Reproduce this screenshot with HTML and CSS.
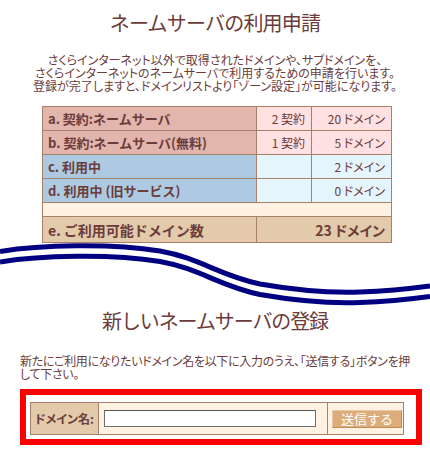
FILE: index.html
```html
<!DOCTYPE html>
<html lang="ja">
<head>
<meta charset="utf-8">
<title>ネームサーバの利用申請</title>
<link rel="stylesheet" href="styles.css">
</head>
<body>
  <h1 class="title">ネームサーバの利用申請</h1>
  <p class="intro">さくらインターネット以外で取得されたドメインや、サブドメインを、<br>さくらインターネットのネームサーバで利用するための申請を行います。<br>登録が完了しますと、ドメインリストより「ゾーン設定」が可能になります。</p>

  <table class="usage">
    <tr class="contract">
      <th>a. 契約:ネームサーバ</th>
      <td class="count">2 契約</td>
      <td class="domains">20 ドメイン</td>
    </tr>
    <tr class="contract">
      <th>b. 契約:ネームサーバ(無料)</th>
      <td class="count">1 契約</td>
      <td class="domains">5 ドメイン</td>
    </tr>
    <tr class="inuse">
      <th>c. 利用中</th>
      <td class="count"></td>
      <td class="domains">2 ドメイン</td>
    </tr>
    <tr class="inuse">
      <th>d. 利用中 (旧サービス)</th>
      <td class="count"></td>
      <td class="domains">0 ドメイン</td>
    </tr>
    <tr class="spacer"><td colspan="3"></td></tr>
    <tr class="total">
      <th>e. ご利用可能ドメイン数</th>
      <td colspan="2" class="domains">23 ドメイン</td>
    </tr>
  </table>

  <svg class="wave" width="430" height="66" viewBox="0 0 430 66" aria-hidden="true">
    <g fill="none" stroke="#000080" stroke-width="5">
      <path d="M0,8.5 C40,2 110,0 160,8 C200,15 220,33 260,41 C300,48 330,50 360,49 C390,48 415,45 430,43"/>
      <path d="M0,8.5 C40,2 110,0 160,8 C200,15 220,33 260,41 C300,48 330,50 360,49 C390,48 415,45 430,43" transform="translate(0,10.5)"/>
    </g>
  </svg>

  <h2 class="title">新しいネームサーバの登録</h2>
  <p class="guide">新たにご利用になりたいドメイン名を以下に入力のうえ、「送信する」ボタンを押<br>して下さい。</p>

  <form class="register" onsubmit="return false">
    <table class="entry">
      <tr>
        <th>ドメイン名:</th>
        <td class="field"><input type="text" class="domain-input"></td>
        <td class="action"><button type="submit" class="send">送信する</button></td>
      </tr>
    </table>
  </form>
</body>
</html>
```

FILE: styles.css
```css
body {
  margin: 0;
  font-family: "Noto Sans CJK JP", "Noto Sans", sans-serif;
  color: #6b3c3a;
  background: #ffffff;
}

.title {
  margin: 0;
  font-size: 20px;
  line-height: 24px;
  font-weight: normal;
  text-align: center;
  letter-spacing: -0.8px;
}

h1.title {
  padding-top: 11px;
}

h2.title {
  letter-spacing: -1.1px;
}

.intro {
  margin: 18px 0 0;
  font-size: 12px;
  line-height: 13px;
  text-align: center;
  font-feature-settings: "palt";
}

/* domain usage summary */
.usage {
  margin: 14px 0 0 42px;
  width: 350px;
  border-collapse: collapse;
  font-size: 12px;
}

.usage th,
.usage td {
  border: 1px solid #a6806a;
  padding: 0 6px;
  height: 23px;
  line-height: 14px;
}

.usage th {
  width: 202px;
  text-align: left;
  font-size: 13px;
  font-weight: bold;
  padding-left: 5px;
}

.usage .count {
  width: 42px;
  text-align: right;
}

.usage .domains {
  text-align: right;
  font-feature-settings: "palt";
}

.contract th { background: #e2b5ad; }
.contract td { background: #ffe1e1; }
.inuse th { background: #aecae3; }
.inuse td { background: #e5f5fd; }

.usage .spacer td {
  height: 13px;
  background: #fff2e3;
  padding: 0;
}

.total th,
.total td {
  background: #e2caab;
  height: 25px;
  font-size: 14px;
  font-weight: bold;
}

.wave {
  display: block;
}

.guide {
  margin: 21px 0 0;
  padding-left: 20px;
  font-size: 12px;
  line-height: 13px;
  letter-spacing: -0.3px;
  font-feature-settings: "palt";
}

/* registration form */
.register {
  margin: 9px 0 0 20px;
  width: 382px;
  border: 6px solid #ff0000;
  padding: 7px 4px 4px;
}

.entry {
  width: 374px;
  border-collapse: collapse;
  font-size: 12px;
}

.entry th,
.entry td {
  border: 1px solid #a6806a;
  height: 31px;
  padding: 0;
}

.entry th {
  width: 67px;
  background: #e2caab;
  font-weight: bold;
  text-align: center;
  font-feature-settings: "palt";
}

.entry .field {
  width: 223px;
  background: #fff2e3;
  padding-left: 5px;
}

.entry .action {
  background: #fff2e3;
  padding-left: 4px;
}

.domain-input {
  display: block;
  box-sizing: border-box;
  width: 212px;
  height: 17px;
  margin: 0;
  border: 1px solid #6e6e6e;
  border-top-color: #555555;
  background: #ffffff;
}

.send {
  display: block;
  box-sizing: border-box;
  width: 70px;
  height: 18px;
  margin: 0;
  padding: 0;
  border: 1px solid #c38c55;
  border-top-color: #e9c9a3;
  border-left-color: #e9c9a3;
  background: #dcad7b;
  color: #ffffff;
  font-family: "Noto Sans CJK JP", sans-serif;
  font-size: 13px;
  line-height: 16px;
}
```
